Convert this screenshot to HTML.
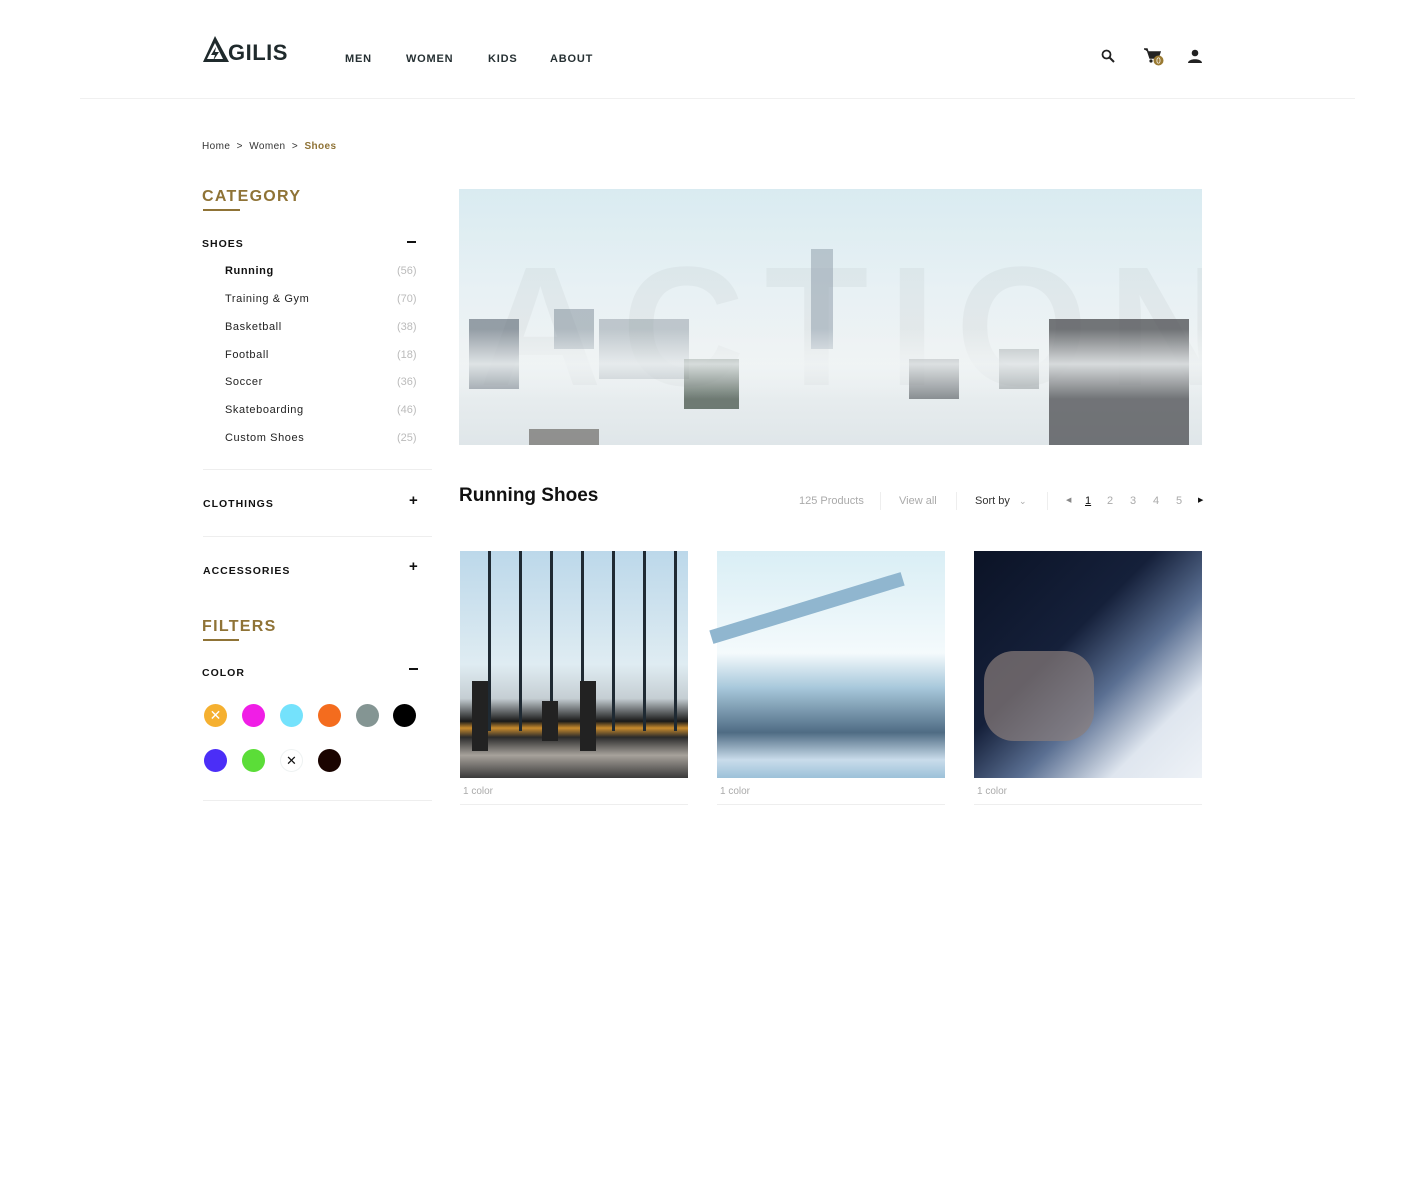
<!DOCTYPE html>
<html><head><meta charset="utf-8"><style>
*{margin:0;padding:0;box-sizing:border-box}
body{width:1405px;height:1184px;background:#fff;font-family:"Liberation Sans",sans-serif;color:#111;position:relative;overflow:hidden}
.a{position:absolute;white-space:nowrap}
.nav{font-size:11px;font-weight:bold;letter-spacing:.8px;color:#263033}
.gold{color:#8f7336}
.cat{font-size:11px;letter-spacing:.6px;color:#222}
.cnt{font-size:11px;color:#bbb}
.hd{font-size:16px;font-weight:bold;letter-spacing:1.3px;color:#8f7336}
.sec{font-size:10.5px;font-weight:bold;letter-spacing:1px;color:#111}
.dot{position:absolute;width:23px;height:23px;border-radius:50%}
.line{position:absolute;height:1px;background:#eee}
.pg{font-size:11px;color:#aaa}
</style></head><body>
<svg class="a" style="left:202px;top:35px" width="28" height="28" viewBox="0 0 28 28"><path d="M13 1 L27 27 H1 Z M13 8 L5 24 H21 Z" fill="#1f2a2c" fill-rule="evenodd"/><path d="M14 12 L9 20 H13 L11 26 L17 17 H13 Z" fill="#1f2a2c"/></svg>
<div class="a" style="left:228px;top:40px;font-size:22px;font-weight:bold;color:#1f2a2c;letter-spacing:.5px">GILIS</div>
<div class="a nav" style="left:345px;top:53px">MEN</div>
<div class="a nav" style="left:406px;top:53px">WOMEN</div>
<div class="a nav" style="left:488px;top:53px">KIDS</div>
<div class="a nav" style="left:550px;top:53px">ABOUT</div>
<svg class="a" style="left:1101px;top:49px" width="14" height="14" viewBox="0 0 14 14"><circle cx="5.5" cy="5.5" r="4" stroke="#222" stroke-width="1.8" fill="none"/><path d="M8.5 8.5L13 13" stroke="#222" stroke-width="2"/></svg>
<svg class="a" style="left:1144px;top:48px" width="22" height="20" viewBox="0 0 22 20"><path d="M0 1H3L6 10H14L16 4H4" fill="#222" stroke="#222" stroke-width="1.5"/><circle cx="7" cy="13" r="1.6" fill="#222"/><circle cx="13" cy="13" r="1.6" fill="#222"/><circle cx="14.5" cy="12.5" r="5" fill="#9a7a32"/><text x="14.5" y="15.5" font-size="8" fill="#fff" text-anchor="middle" font-family="Liberation Sans">0</text></svg>
<svg class="a" style="left:1188px;top:49px" width="14" height="14" viewBox="0 0 14 14"><circle cx="7" cy="4" r="3.3" fill="#222"/><path d="M0 14C0 9 14 9 14 14Z" fill="#222"/></svg>
<div class="line" style="left:80px;top:98px;width:1275px;background:#f0f0f0"></div>
<div class="a" style="left:202px;top:141px;font-size:10px;color:#333;letter-spacing:.4px">Home &nbsp;&gt;&nbsp; Women &nbsp;&gt;&nbsp; <b class="gold">Shoes</b></div>

<div class="a hd" style="left:202px;top:188px">CATEGORY</div>
<div class="a" style="left:203px;top:209px;width:37px;height:2px;background:#8f7336"></div>
<div class="a sec" style="left:202px;top:238px">SHOES</div>
<div class="a" style="left:407px;top:241px;width:9px;height:2px;background:#111"></div>
<div class="a cat" style="left:225px;top:265px;font-weight:bold;color:#111">Running</div><div class="a cnt" style="left:397px;top:265px">(56)</div>
<div class="a cat" style="left:225px;top:293px">Training &amp; Gym</div><div class="a cnt" style="left:397px;top:293px">(70)</div>
<div class="a cat" style="left:225px;top:321px">Basketball</div><div class="a cnt" style="left:397px;top:321px">(38)</div>
<div class="a cat" style="left:225px;top:349px">Football</div><div class="a cnt" style="left:397px;top:349px">(18)</div>
<div class="a cat" style="left:225px;top:376px">Soccer</div><div class="a cnt" style="left:397px;top:376px">(36)</div>
<div class="a cat" style="left:225px;top:404px">Skateboarding</div><div class="a cnt" style="left:397px;top:404px">(46)</div>
<div class="a cat" style="left:225px;top:432px">Custom Shoes</div><div class="a cnt" style="left:397px;top:432px">(25)</div>
<div class="line" style="left:203px;top:469px;width:229px"></div>
<div class="a sec" style="left:203px;top:498px">CLOTHINGS</div>
<div class="a" style="left:409px;top:492px;font-size:15px;font-weight:bold">+</div>
<div class="line" style="left:203px;top:536px;width:229px"></div>
<div class="a sec" style="left:203px;top:565px">ACCESSORIES</div>
<div class="a" style="left:409px;top:558px;font-size:15px;font-weight:bold">+</div>
<div class="a hd" style="left:202px;top:618px">FILTERS</div>
<div class="a" style="left:203px;top:639px;width:36px;height:2px;background:#8f7336"></div>
<div class="a sec" style="left:202px;top:667px">COLOR</div>
<div class="a" style="left:409px;top:668px;width:9px;height:2px;background:#111"></div>
<div class="dot" style="left:204px;top:704px;background:#f5b030;color:#fff;font-size:14px;text-align:center;line-height:23px">✕</div>
<div class="dot" style="left:242px;top:704px;background:#f01ee6"></div>
<div class="dot" style="left:280px;top:704px;background:#74e2fc"></div>
<div class="dot" style="left:318px;top:704px;background:#f46c1e"></div>
<div class="dot" style="left:356px;top:704px;background:#849593"></div>
<div class="dot" style="left:393px;top:704px;background:#000"></div>
<div class="dot" style="left:204px;top:749px;background:#4b2ef7"></div>
<div class="dot" style="left:242px;top:749px;background:#5bdd38"></div>
<div class="dot" style="left:280px;top:749px;border:1px solid #eef2f2;color:#111;font-size:13px;text-align:center;line-height:21px">✕</div>
<div class="dot" style="left:318px;top:749px;background:#1a0400"></div>
<div class="line" style="left:203px;top:800px;width:229px"></div>

<div class="a" style="left:459px;top:189px;width:743px;height:256px;background:linear-gradient(180deg,#d9ebf1 0%,#e8f1f4 40%,#eef2f3 65%,#dfe6e9 100%);overflow:hidden">
 <div class="a" style="left:20px;top:40px;font-size:170px;font-weight:bold;color:rgba(0,0,0,.035);letter-spacing:20px">ACTION</div>
 <div class="a" style="left:10px;top:130px;width:50px;height:70px;background:#5a6672;opacity:.6"></div>
 <div class="a" style="left:95px;top:120px;width:40px;height:40px;background:#7c8a96;opacity:.5"></div>
 <div class="a" style="left:140px;top:130px;width:90px;height:60px;background:#7b8792;opacity:.4"></div>
 <div class="a" style="left:225px;top:170px;width:55px;height:50px;background:#3b4a3e;opacity:.7"></div>
 <div class="a" style="left:352px;top:60px;width:22px;height:100px;background:#9aa7b3;opacity:.6"></div>
 <div class="a" style="left:450px;top:170px;width:50px;height:40px;background:#4b5055;opacity:.6"></div>
 <div class="a" style="left:590px;top:130px;width:140px;height:126px;background:#4a4b4f;opacity:.75"></div>
 <div class="a" style="left:540px;top:160px;width:40px;height:40px;background:#6b7378;opacity:.5"></div>
 <div class="a" style="left:70px;top:240px;width:70px;height:16px;background:#5a5652;opacity:.6"></div>
 <div class="a" style="left:0;top:140px;width:743px;height:70px;background:linear-gradient(180deg,rgba(240,244,245,0),rgba(240,244,245,.8),rgba(240,244,245,0))"></div>
</div>

<div class="a" style="left:459px;top:485px;font-size:19px;font-weight:bold;color:#111">Running Shoes</div>
<div class="a pg" style="left:799px;top:495px">125 Products</div>
<div class="a" style="left:880px;top:492px;width:1px;height:18px;background:#eee"></div>
<div class="a pg" style="left:899px;top:495px">View all</div>
<div class="a" style="left:956px;top:492px;width:1px;height:18px;background:#eee"></div>
<div class="a" style="left:975px;top:495px;font-size:11px;color:#333">Sort by &nbsp; <span style="color:#aaa;font-size:9px">⌄</span></div>
<div class="a" style="left:1047px;top:492px;width:1px;height:18px;background:#eee"></div>
<div class="a" style="left:1066px;top:496px;font-size:7px;color:#888">◀</div>
<div class="a" style="left:1085px;top:495px;font-size:11px;color:#111;text-decoration:underline">1</div>
<div class="a pg" style="left:1107px;top:495px">2</div>
<div class="a pg" style="left:1130px;top:495px">3</div>
<div class="a pg" style="left:1153px;top:495px">4</div>
<div class="a pg" style="left:1176px;top:495px">5</div>
<div class="a" style="left:1198px;top:496px;font-size:7px;color:#111">▶</div>

<div class="a" style="left:460px;top:551px;width:228px;height:227px;background:linear-gradient(180deg,#bcd8ea 0%,#dfecf2 50%,#c5ced3 65%,#1a1a1a 75%,#c98b2d 78%,#2b2b2b 82%,#a7a29b 90%,#3a3a3a 100%)">
 <div class="a" style="left:0;top:0;width:228px;height:180px;background:repeating-linear-gradient(90deg,transparent 0 28px,#1f2a33 28px 31px)"></div>
 <div class="a" style="left:12px;top:130px;width:16px;height:70px;background:#222"></div>
 <div class="a" style="left:120px;top:130px;width:16px;height:70px;background:#222"></div>
 <div class="a" style="left:82px;top:150px;width:16px;height:40px;background:#222"></div>
</div>
<div class="a" style="left:717px;top:551px;width:228px;height:227px;background:linear-gradient(180deg,#d9eef5 0%,#f4fafc 45%,#a9c9dc 60%,#4f6c84 80%,#c9dceb 92%,#9cc1d9 100%)">
 <div class="a" style="left:-10px;top:50px;width:200px;height:14px;background:#90b6cf;transform:rotate(-17deg)"></div>
</div>
<div class="a" style="left:974px;top:551px;width:228px;height:227px;background:linear-gradient(135deg,#0b1326 0%,#15203a 40%,#5a6f92 60%,#dfe6ef 80%,#eef2f7 100%)">
 <div class="a" style="left:10px;top:100px;width:110px;height:90px;background:#8a7d7a;border-radius:30px;opacity:.7"></div>
</div>
<div class="a" style="left:463px;top:786px;font-size:10px;color:#aaa">1 color</div>
<div class="a" style="left:720px;top:786px;font-size:10px;color:#aaa">1 color</div>
<div class="a" style="left:977px;top:786px;font-size:10px;color:#aaa">1 color</div>
<div class="line" style="left:460px;top:804px;width:228px"></div>
<div class="line" style="left:717px;top:804px;width:228px"></div>
<div class="line" style="left:974px;top:804px;width:228px"></div>
</body></html>
